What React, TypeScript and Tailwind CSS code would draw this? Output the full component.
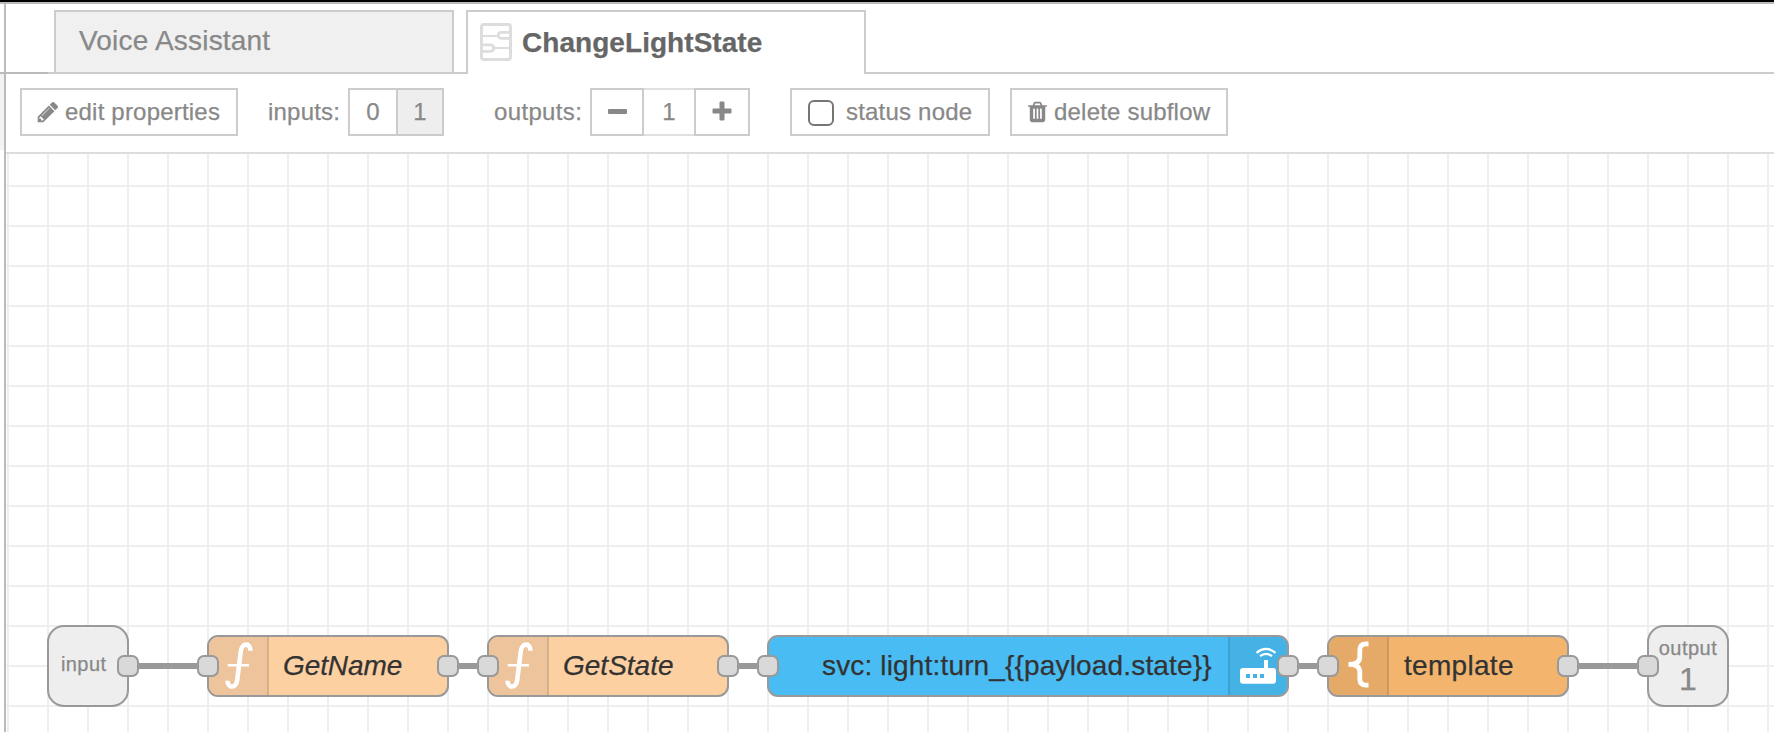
import React from "react";

const FONT = "font-['Liberation_Sans',Arial,sans-serif] [-webkit-text-stroke:0.25px_currentColor]";

function PencilIcon() {
  return (
    <svg viewBox="0 0 1792 1792" className="size-6 shrink-0" fill="#888">
      <path d="M491 1536l91-91-235-235-91 91v107h128v128h107zm523-928q0-22-22-22-10 0-17 7l-542 542q-7 7-7 17 0 22 22 22 10 0 17-7l542-542q7-7 7-17zm-54-192l416 416-832 832h-416v-416zm683 96q0 53-37 90l-166 166-416-416 166-165q36-38 90-38 53 0 91 38l235 234q37 39 37 91z" />
    </svg>
  );
}

function TrashIcon() {
  return (
    <svg viewBox="192 0 1408 1792" className="h-6 w-[19px] shrink-0" fill="#888">
      <path d="M704 1376v-704q0-14-9-23t-23-9h-64q-14 0-23 9t-9 23v704q0 14 9 23t23 9h64q14 0 23-9t9-23zm256 0v-704q0-14-9-23t-23-9h-64q-14 0-23 9t-9 23v704q0 14 9 23t23 9h64q14 0 23-9t9-23zm256 0v-704q0-14-9-23t-23-9h-64q-14 0-23 9t-9 23v704q0 14 9 23t23 9h64q14 0 23-9t9-23zm-544-992h448l-48-117q-7-9-17-11h-317q-10 2-17 11zm928 32v64q0 14-9 23t-23 9h-96v948q0 83-47 143.5t-113 60.5h-832q-66 0-113-58.5t-47-141.5v-952h-96q-14 0-23-9t-9-23v-64q0-14 9-23t23-9h309l70-167q15-37 54-63t79-26h320q40 0 79 26t54 63l70 167h309q14 0 23 9t9 23z" />
    </svg>
  );
}

function SubflowIcon() {
  return (
    <svg viewBox="0 0 32 38" className="h-[38px] w-8 shrink-0" fill="none" stroke="#ddd">
      <rect x="1.500" y="1.500" width="29" height="35" rx="2.5" strokeWidth="3" />
      <path d="M2 13H18M14 25H30" strokeWidth="2" />
      <path d="M30 9.250H21.500Q18.250 9.250 18.250 12Q18.250 15.250 21.500 15.250H30M2 21.750H10.500Q13.750 21.750 13.750 25Q13.750 28.250 10.500 28.250H2" strokeWidth="2.75" />
    </svg>
  );
}

function FunctionIcon() {
  return (
    <svg viewBox="0 0 60 58" className="h-[58px] w-[60px]" fill="none" stroke="#fff">
      <path d="M41.500 13.800C41.500 5.500 33 5.500 31.800 14L28.200 43C27.200 51.800 18.500 51.500 18.500 43.700" strokeWidth="4.600" />
      <path d="M18.700 28.200H40" strokeWidth="2.600" />
    </svg>
  );
}

function RouterIcon() {
  return (
    <svg viewBox="2 0 57 58" className="h-[58px] w-[57px]">
      <path fill="#fff" fillRule="evenodd" d="M15 31H36V23H40V31H45Q48 31 48 34V43.700Q48 46.700 45 46.700H15Q12 46.700 12 43.700V34Q12 31 15 31ZM18 37V41H22V37ZM25 37V41H29V37ZM32 37V41H36V37Z" />
      <path fill="none" stroke="#fff" strokeWidth="2.200" d="M28.500 15.800Q38 8 47.500 15.800M32 19.200Q38 14.500 44 19.200" />
    </svg>
  );
}

function BraceIcon() {
  return (
    <svg viewBox="0 0 60 58" className="h-[58px] w-[60px]" fill="none" stroke="#fff" strokeWidth="4.800">
      <path d="M39.500 6.800H37Q30.800 6.800 30.800 13V20Q30.800 27.400 19.500 27.400Q30.800 27.400 30.800 35V42Q30.800 48.200 37 48.200H39.500" />
    </svg>
  );
}

function Port({ className }: { className: string }) {
  return <div className={`absolute top-[501px] size-[22px] rounded-[7px] border-2 border-[#999] bg-[#d9d9d9] ${className}`} />;
}

function Wire({ className }: { className: string }) {
  return <div className={`absolute top-[509px] h-1.5 bg-[#999] ${className}`} />;
}

export default function App() {
  return (
    <div className={`relative flex h-[732px] w-[1774px] flex-col overflow-hidden bg-white text-[#888] ${FONT}`}>
      <div className="h-0.5 shrink-0 bg-black" />
      <div className="h-0.5 shrink-0 bg-[#bbb]" />
      <div className="flex min-h-0 flex-1">
        <div className="flex w-1 shrink-0 flex-col">
          <div className="h-[70px] border-b-2 border-[#bbb]" />
          <div className="h-[76px] bg-[#f3f3f3]" />
        </div>
        <div className="w-0.5 shrink-0 bg-[#bbb]" />
        <div className="flex min-w-0 flex-1 flex-col">
          <div className="flex h-[70px] shrink-0 text-[28px] whitespace-nowrap">
            <div className="w-[42px] border-b-2 border-[#bbb]" />
            <div className="w-1.5 border-b-2 border-[#ccc]" />
            <div className="mt-1.5 flex w-[400px] border-2 border-[#ccc] bg-[#f0f0f0] pt-[13px] pl-[23px] leading-8 tracking-[0.2px]">
              <span>Voice Assistant</span>
            </div>
            <div className="w-3 border-b-2 border-[#ccc]" />
            <div className="mt-1.5 flex w-[400px] border-x-2 border-t-2 border-[#ccc] pt-[11px] pl-3">
              <SubflowIcon />
              <span className="ml-2.5 pt-1 leading-8 font-bold tracking-[0.05px] text-[#666]">ChangeLightState</span>
            </div>
            <div className="flex-1 border-b-2 border-[#ccc]" />
          </div>
          <div className="flex h-20 shrink-0 items-start border-b-2 border-[#ddd] pt-3.5 pl-3.5 text-2xl tracking-[0.2px] whitespace-nowrap">
            <button className="flex h-12 w-[218px] items-center border-2 border-[#ccc] pl-3.5">
              <PencilIcon />
              <span className="ml-[5px]">edit properties</span>
            </button>
            <span className="ml-[30px] w-20 leading-12">inputs:</span>
            <div className="flex h-12 w-24 border-2 border-[#ccc] leading-11">
              <span className="w-[46px] text-center">0</span>
              <span className="flex-1 border-l-2 border-[#ccc] bg-[#eee] text-center">1</span>
            </div>
            <span className="ml-[50px] w-24 leading-12 tracking-[0.35px]">outputs:</span>
            <div className="flex h-12 w-40 leading-11">
              <div className="flex w-[54px] items-center justify-center border-2 border-[#ccc]">
                <div className="mb-0.5 h-[5px] w-[19px] rounded-[1px] bg-[#888]" />
              </div>
              <div className="w-[50px] border-y-2 border-[#e0e0e0] text-center">1</div>
              <div className="flex w-14 items-center justify-center border-2 border-[#ccc]">
                <svg viewBox="0 0 20 20" className="mb-0.5 size-5" fill="#888">
                  <path d="M8.500 0.500H11.500Q12.500 0.500 12.500 1.500V7.500H18.500Q19.500 7.500 19.500 8.500V11.500Q19.500 12.500 18.500 12.500H12.500V18.500Q12.500 19.500 11.500 19.500H8.500Q7.500 19.500 7.500 18.500V12.500H1.500Q.5 12.500 .5 11.500V8.500Q.5 7.500 1.500 7.500H7.500V1.500Q7.500 .5 8.500 .5Z" />
                </svg>
              </div>
            </div>
            <label className="ml-10 flex h-12 w-[200px] items-center border-2 border-[#ccc] pl-4">
              <span className="mt-0.5 size-[26px] rounded-[6px] border-2 border-[#767676]" />
              <span className="ml-3">status node</span>
            </label>
            <button className="ml-5 flex h-12 w-[218px] items-center border-2 border-[#ccc] pl-4">
              <TrashIcon />
              <span className="ml-[7px]">delete subflow</span>
            </button>
          </div>
          <div className="relative flex-1 overflow-hidden bg-[linear-gradient(to_right,#eee_2px,transparent_2px),linear-gradient(to_bottom,#eee_2px,transparent_2px)] bg-size-[40px_40px] bg-position-[1px_31px] text-[28px] whitespace-nowrap text-[#333]">
            <Wire className="left-[122px] w-[80px]" />
            <Wire className="left-[442px] w-[40px]" />
            <Wire className="left-[722px] w-[40px]" />
            <Wire className="left-[1282px] w-[40px]" />
            <Wire className="left-[1562px] w-[80px]" />

            <div className="absolute top-[471px] left-[41px] h-[82px] w-[82px] rounded-[17px] border-2 border-[#999] bg-[#eee] pt-[23px] pl-3 text-[20px] leading-7 tracking-[0.4px] text-[#888]">
              input
            </div>
            <div className="absolute top-[481px] left-[201px] flex h-[62px] w-[242px] overflow-hidden rounded-[11px] border-2 border-[#999] bg-[#fdd0a2] leading-[57px]">
              <div className="w-[60px] border-r-2 border-[#d8b18a] bg-[#eec49c]"><FunctionIcon /></div>
              <span className="ml-3.5 tracking-[-0.1px] italic">GetName</span>
            </div>
            <div className="absolute top-[481px] left-[481px] flex h-[62px] w-[242px] overflow-hidden rounded-[11px] border-2 border-[#999] bg-[#fdd0a2] leading-[57px]">
              <div className="w-[60px] border-r-2 border-[#d8b18a] bg-[#eec49c]"><FunctionIcon /></div>
              <span className="ml-3.5 italic">GetState</span>
            </div>
            <div className="absolute top-[481px] left-[761px] flex h-[62px] w-[522px] overflow-hidden rounded-[11px] border-2 border-[#999] bg-[#49bdf3] leading-[57px]">
              <span className="ml-[53px] w-[406px] shrink-0 tracking-[0.16px]">{"svc: light:turn_{{payload.state}}"}</span>
              <div className="flex-1 border-l-2 border-[#3ea1cf] bg-[#45b2e5]"><RouterIcon /></div>
            </div>
            <div className="absolute top-[481px] left-[1321px] flex h-[62px] w-[242px] overflow-hidden rounded-[11px] border-2 border-[#999] bg-[#f3b46e] leading-[57px]">
              <div className="w-[60px] border-r-2 border-[#cd985d] bg-[#e5aa68]"><BraceIcon /></div>
              <span className="ml-[15px] tracking-[0.3px]">template</span>
            </div>
            <div className="absolute top-[471px] left-[1641px] flex h-[82px] w-[82px] flex-col items-center rounded-[17px] border-2 border-[#999] bg-[#eee] text-[#888]">
              <span className="mt-[7px] text-[20px] leading-7 tracking-[0.5px]">output</span>
              <span className="mt-px text-[32px] leading-8">1</span>
            </div>

            <Port className="left-[111px]" />
            <Port className="left-[191px]" />
            <Port className="left-[431px]" />
            <Port className="left-[471px]" />
            <Port className="left-[711px]" />
            <Port className="left-[751px]" />
            <Port className="left-[1271px]" />
            <Port className="left-[1311px]" />
            <Port className="left-[1551px]" />
            <Port className="left-[1631px]" />
          </div>
        </div>
      </div>
    </div>
  );
}
